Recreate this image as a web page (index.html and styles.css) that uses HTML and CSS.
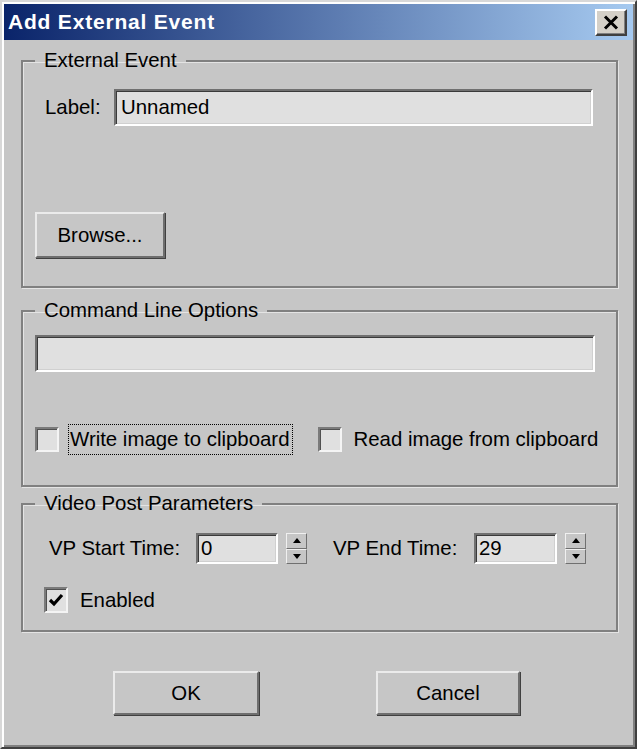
FILE: index.html
```html
<!DOCTYPE html>
<html>
<head>
<meta charset="utf-8">
<title>Add External Event</title>
<link rel="stylesheet" href="styles.css">
</head>
<body>
<div class="window">
  <div class="titlebar">
    <span class="title">Add External Event</span>
    <button class="close" aria-label="Close">
      <svg width="16" height="15" viewBox="0 0 16 15"><path d="M2 1.5 L14 13.5 M14 1.5 L2 13.5" stroke="#000" stroke-width="3" fill="none"/></svg>
    </button>
  </div>
  <div class="content">
    <fieldset class="group g1">
      <legend>External Event</legend>
      <div class="label-row">
        <span class="lbl">Label:</span>
        <div class="field wide">Unnamed</div>
      </div>
      <button class="btn browse">Browse...</button>
    </fieldset>

    <fieldset class="group g2">
      <legend>Command Line Options</legend>
      <div class="field cmd"></div>
      <div class="check-row">
        <span class="box"></span>
        <span class="chk-label focus">Write image to clipboard</span>
        <span class="box box2"></span>
        <span class="chk-label plain">Read image from clipboard</span>
      </div>
    </fieldset>

    <fieldset class="group g3">
      <legend>Video Post Parameters</legend>
      <div class="time-row">
        <span class="tlabel start">VP Start Time:</span>
        <div class="field num">0</div>
        <div class="spin"><span class="up"></span><span class="down"></span></div>
        <span class="tlabel end">VP End Time:</span>
        <div class="field num num2">29</div>
        <div class="spin"><span class="up"></span><span class="down"></span></div>
      </div>
      <div class="enabled-row">
        <span class="box checked">
          <svg width="16" height="15" viewBox="0 0 16 15"><path d="M2 7 L6 11 L14 2" stroke="#000" stroke-width="3.2" fill="none"/></svg>
        </span>
        <span class="en-label">Enabled</span>
      </div>
    </fieldset>

    <div class="buttons">
      <button class="btn ok">OK</button>
      <button class="btn cancel">Cancel</button>
    </div>
  </div>
</div>
</body>
</html>
```

FILE: styles.css
```css
* { box-sizing: border-box; }
html, body { margin: 0; padding: 0; background: #c6c6c6; }
body {
  font-family: "Liberation Sans", Arial, sans-serif;
  font-size: 20.4px;
  color: #000;
}
.window {
  width: 637px;
  height: 749px;
  background: #c6c6c6;
  border: 2px solid;
  border-color: #d8d8d8 #404040 #404040 #d8d8d8;
  box-shadow: inset 2px 2px 0 #ffffff, inset -2px -2px 0 #808080;
  padding: 2px;
  display: flex;
  flex-direction: column;
}
.titlebar {
  height: 36px;
  flex: none;
  background: linear-gradient(to right, #0a246a 0%, #a6caf0 100%);
  display: flex;
  align-items: center;
  justify-content: space-between;
  padding: 0 6px 0 4px;
}
.title {
  color: #fff;
  font-weight: bold;
  font-size: 21px;
  letter-spacing: 0.8px;
  line-height: 36px;
}
.close {
  width: 32px;
  height: 27px;
  margin-top: 1px;
  padding: 0;
  background: #d4d0c8;
  border: 2px solid;
  border-color: #ffffff #404040 #404040 #ffffff;
  box-shadow: inset -1px -1px 0 #808080;
  display: flex;
  align-items: center;
  justify-content: center;
}
.content {
  padding: 9px 0 0 17px;
}
.group {
  width: 597px;
  margin: 0;
  padding: 0;
  border: 2px solid #808080;
  box-shadow: inset 1px 1px 0 #e4e4e4, 1px 1px 0 #e4e4e4;
  min-inline-size: 0;
}
.group legend {
  margin-left: 12px;
  padding: 0 9px;
  line-height: 23px;
  font-size: 20.4px;
}
.field {
  height: 37px;
  background: #e0e0e0;
  border: 2px solid;
  border-color: #707070 #ffffff #ffffff #707070;
  box-shadow: inset 1px 1px 0 #3a3a3a, inset -1px -1px 0 #d0d0d0;
  line-height: 33px;
  padding-left: 5px;
  font-size: 20.4px;
}
.label-row {
  display: flex;
  align-items: center;
  margin-top: 17px;
  padding-left: 22px;
}
.lbl { width: 69px; }
.field.wide { width: 479px; }
.btn {
  font-family: "Liberation Sans", Arial, sans-serif;
  font-size: 20.4px;
  color: #000;
  background: #c6c6c6;
  border: 2px solid;
  border-color: #ebebeb #6e6e6e #6e6e6e #ebebeb;
  box-shadow: 1px 1px 0 #404040;
  padding: 0;
  display: block;
}
.browse {
  width: 130px;
  height: 46px;
  margin: 86px 0 28px 12px;
}
.g2 { margin-top: 11px; }
.field.cmd {
  width: 560px;
  margin: 13px 0 0 12px;
}
.check-row {
  display: flex;
  align-items: center;
  height: 32px;
  margin: 51px 0 30px 12px;
}
.box {
  width: 24px;
  height: 25px;
  flex: none;
  background: #e0e0e0;
  border: 2px solid;
  border-color: #7a7a7a #f4f4f4 #f4f4f4 #7a7a7a;
  box-shadow: inset 1px 1px 0 #505050;
  display: flex;
  align-items: center;
  justify-content: center;
}
.chk-label.focus {
  margin-left: 9px;
  border: 1px dotted #000;
  padding: 0 2px 0 1px;
  line-height: 29px;
}
.box2 { margin-left: 25px; }
.chk-label.plain { margin-left: 12px; }
.g3 { margin-top: 5px; }
.time-row {
  display: flex;
  align-items: center;
  margin: 18px 0 0 26px;
  height: 31px;
}
.tlabel.start { width: 147px; }
.tlabel.end { width: 141px; margin-left: 26px; }
.field.num {
  width: 82px;
  height: 31px;
  line-height: 27px;
  padding-left: 3px;
}
.field.num2 { width: 83px; }
.spin {
  width: 21px;
  height: 31px;
  margin-left: 8px;
  display: flex;
  flex-direction: column;
}
.spin span {
  flex: 1;
  border: 1px solid;
  border-color: #f0f0f0 #707070 #707070 #f0f0f0;
  display: flex;
  align-items: center;
  justify-content: center;
}
.spin .up::before {
  content: "";
  border-left: 4px solid transparent;
  border-right: 4px solid transparent;
  border-bottom: 5px solid #000;
}
.spin .down::before {
  content: "";
  border-left: 4px solid transparent;
  border-right: 4px solid transparent;
  border-top: 5px solid #000;
}
.enabled-row {
  display: flex;
  align-items: center;
  margin: 23px 0 17px 21px;
  height: 26px;
}
.box.checked { height: 26px; }
.en-label { margin-left: 12px; }
.buttons {
  display: flex;
  margin: 39px 0 0 92px;
}
.ok { width: 146px; height: 44px; }
.cancel { width: 144px; height: 44px; margin-left: 117px; }
```
